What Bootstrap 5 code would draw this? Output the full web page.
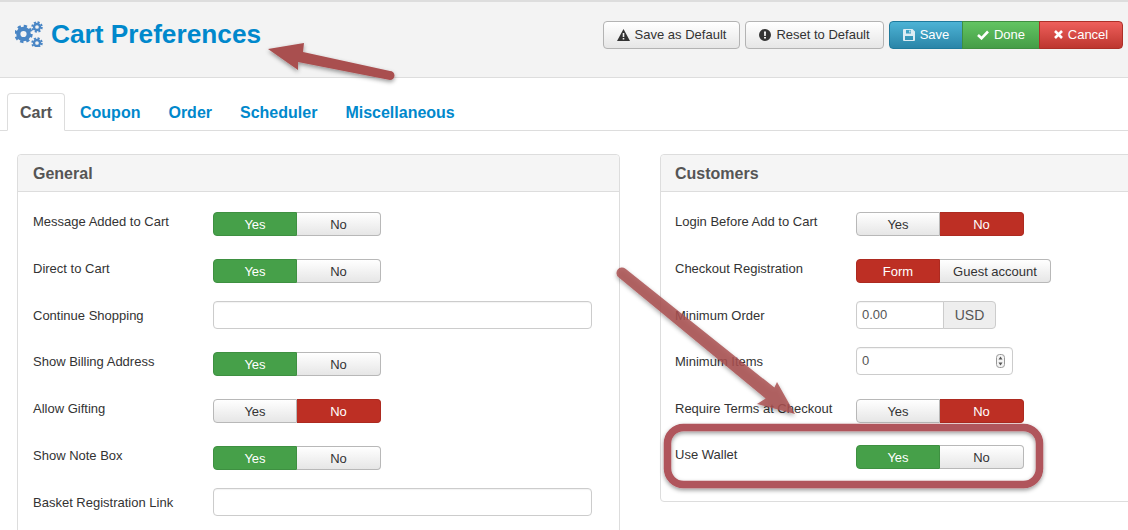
<!DOCTYPE html>
<html lang="en">
<head>
<meta charset="utf-8">
<title>Cart Preferences</title>
<link href="https://cdn.jsdelivr.net/npm/bootstrap@5.3.0/dist/css/bootstrap.min.css" rel="stylesheet">
<style>
html,body{height:100%;}
body{font-family:"Liberation Sans",Arial,sans-serif;font-size:13px;color:#333;background:#fff;overflow:hidden;width:1128px;height:530px;position:relative;}
.top-bar{background:#f3f3f3;border-top:2px solid #ddd;border-bottom:1px solid #ddd;height:78px;padding:0 5px 0 15px;}
.page-title{font-size:26.25px;line-height:32px;font-weight:700;color:#0088cc;margin:0;position:relative;top:-6px;}
.gears{width:30px;height:26px;margin-right:6px;}
.tool-row{position:relative;top:-5px;gap:5px;}
.tool-btn{font-size:13px;line-height:16px;height:28px;padding:0 0;border-radius:4px;display:inline-flex;align-items:center;justify-content:center;gap:5px;border:1px solid #b3b3b3;}
.tool-plain{background:linear-gradient(#fff,#e6e6e6);color:#333;width:137px;}
.tool-wide{width:139px;}
.tool-save{background:linear-gradient(#4db3d5,#2a85a8);border-color:#1f7a9c;color:#fff;width:74px;}
.tool-done{background:linear-gradient(#62c462,#459d47);border-color:#3f8f41;color:#fff;width:78px;}
.tool-cancel{background:linear-gradient(#ee5f5b,#bd362f);border-color:#ad2f28;color:#fff;width:84px;}
.tab-strip{padding:15px 0 0 7px;border-bottom-color:#ddd;}
.tab-strip .nav-link{font-size:16px;line-height:20px;font-weight:700;color:#0088cc;padding:9px 12px 7px;margin-right:2px;border-radius:4px 4px 0 0;height:38px;}
.tab-strip .nav-link.active{color:#555;border-color:#ddd #ddd #fff;}
.panels{padding:23px 0 0 17px;gap:40px;width:1400px;}
.panel-box{width:603px;border:1px solid #ddd;border-radius:4px;background:#fff;flex:none;}
.panel-tall{min-height:420px;}
.panel-head{background:#f5f5f5;border-bottom:1px solid #ddd;height:37px;padding:1px 15px 0;font-size:16px;font-weight:700;color:#555;line-height:36px;border-radius:4px 4px 0 0;}
.panel-body{padding:15px 15px 15px;}
.opt-right .panel-head,.opt-right .panel-body{padding-left:14px;}
.opt-row{height:46.83px;display:flex;}
.opt-right .opt-row{height:46.33px;}
.opt-right .opt-row:nth-child(-n+2){height:47px;}
.opt-label{width:180px;flex:none;line-height:16px;padding-top:7px;color:#333;}
.opt-right .opt-label{width:181px;}
.seg{margin-top:5px;height:24px;display:flex;}
.seg-btn{height:24px;width:84px;font-size:13px;line-height:23px;padding:0;text-align:center;border:1px solid #b8b8b8;background:linear-gradient(#fff,#e6e6e6);color:#333;border-radius:0;}
.seg-btn:first-child{border-radius:4px 0 0 4px;}
.seg-btn:last-child{border-radius:0 4px 4px 0;border-left:0;}
.seg-wide{width:111px;}
.seg-yes{background:#46a049;border-color:#3e9041;color:#fff;}
.seg-no{background:#bd2f24;border-color:#ad2a20;color:#fff;}
.text-box{height:28px;border:1px solid #ccc;border-radius:4px;font-size:13px;line-height:26px;padding:0 5px;color:#555;background:#fff;box-shadow:inset 0 1px 1px rgba(0,0,0,.05);}
.wide-box{width:379px;}
.unit-group{width:140px;height:28px;}
.unit-group .text-box{width:88px;border-radius:4px 0 0 4px;}
.unit-tag{width:53px;margin-left:-1px;border:1px solid #ccc;border-radius:0 4px 4px 0;background:#eee;color:#555;font-size:14px;line-height:26px;text-align:center;}
.spin-wrap{position:relative;width:157px;height:28px;}
.spin-wrap .text-box{width:157px;}
.spin-icon{position:absolute;right:8px;top:7px;width:9px;height:14px;}
.notes{position:absolute;left:0;top:0;width:1128px;height:530px;pointer-events:none;}
</style>
</head>
<body>
<header class="top-bar d-flex align-items-center justify-content-between">
  <h1 class="page-title d-flex align-items-center">
    <svg class="gears" viewBox="0 0 30 26" aria-hidden="true">
      <g fill="none" stroke="#4a86c5">
        <circle cx="8.500" cy="13" r="5.200" stroke-width="4.200"/>
        <circle cx="8.500" cy="13" r="7.900" stroke-width="2.600" stroke-dasharray="3.300 2.905"/>
        <circle cx="22" cy="6" r="3" stroke-width="2.300"/>
        <circle cx="22" cy="6" r="4.800" stroke-width="1.900" stroke-dasharray="2.100 1.670"/>
        <circle cx="22" cy="22" r="3" stroke-width="2.300"/>
        <circle cx="22" cy="22" r="4.800" stroke-width="1.900" stroke-dasharray="2.100 1.670"/>
      </g>
    </svg>
    Cart Preferences
  </h1>
  <div class="tool-row d-flex">
    <button type="button" class="btn tool-btn tool-plain">
      <svg width="13" height="12" viewBox="0 0 13 12"><path fill="#333" fill-rule="evenodd" d="M6.500 0 13 12H0zM5.700 4v4h1.600V4zm0 4.900v1.500h1.600V8.900z"/></svg>
      Save as Default</button>
    <button type="button" class="btn tool-btn tool-plain tool-wide">
      <svg width="12" height="12" viewBox="0 0 12 12"><path fill="#333" fill-rule="evenodd" d="M6 0a6 6 0 1 1 0 12A6 6 0 0 1 6 0zM5 2.400l.2 4.600h1.600L7 2.400zm0 5.500v1.700h2V7.900z"/></svg>
      Reset to Default</button>
    <div class="btn-group">
      <button type="button" class="btn tool-btn tool-save">
        <svg width="12" height="12" viewBox="0 0 12 12"><path fill="#dcecf3" fill-rule="evenodd" d="M1 0h8.500L12 2.500V11a1 1 0 0 1-1 1H1a1 1 0 0 1-1-1V1a1 1 0 0 1 1-1zm2 1v3.500h5V1zM2 7v4h8V7zm4.200-5.600h1.300v2.200H6.200z"/></svg>
        Save</button>
      <button type="button" class="btn tool-btn tool-done">
        <svg width="12" height="10" viewBox="0 0 12 10"><path fill="none" stroke="#fff" stroke-width="2.600" d="M1 5l3.500 3.300L11 1.500"/></svg>
        Done</button>
      <button type="button" class="btn tool-btn tool-cancel">
        <svg width="9" height="9" viewBox="0 0 9 9"><path fill="none" stroke="#fff" stroke-width="2.600" d="M1 1l7 7M8 1L1 8"/></svg>
        Cancel</button>
    </div>
  </div>
</header>

<ul class="nav nav-tabs tab-strip">
  <li class="nav-item"><a class="nav-link active" href="#">Cart</a></li>
  <li class="nav-item"><a class="nav-link" href="#">Coupon</a></li>
  <li class="nav-item"><a class="nav-link" href="#">Order</a></li>
  <li class="nav-item"><a class="nav-link" href="#">Scheduler</a></li>
  <li class="nav-item"><a class="nav-link" href="#">Miscellaneous</a></li>
</ul>

<main class="panels d-flex align-items-start">
  <section class="panel-box panel-tall">
    <div class="panel-head">General</div>
    <div class="panel-body">
      <div class="opt-row"><div class="opt-label">Message Added to Cart</div><div class="seg"><button class="seg-btn seg-yes">Yes</button><button class="seg-btn">No</button></div></div>
      <div class="opt-row"><div class="opt-label">Direct to Cart</div><div class="seg"><button class="seg-btn seg-yes">Yes</button><button class="seg-btn">No</button></div></div>
      <div class="opt-row"><div class="opt-label">Continue Shopping</div><div class="text-box wide-box"></div></div>
      <div class="opt-row"><div class="opt-label">Show Billing Address</div><div class="seg"><button class="seg-btn seg-yes">Yes</button><button class="seg-btn">No</button></div></div>
      <div class="opt-row"><div class="opt-label">Allow Gifting</div><div class="seg"><button class="seg-btn">Yes</button><button class="seg-btn seg-no">No</button></div></div>
      <div class="opt-row"><div class="opt-label">Show Note Box</div><div class="seg"><button class="seg-btn seg-yes">Yes</button><button class="seg-btn">No</button></div></div>
      <div class="opt-row"><div class="opt-label">Basket Registration Link</div><div class="text-box wide-box"></div></div>
    </div>
  </section>
  <section class="panel-box opt-right">
    <div class="panel-head">Customers</div>
    <div class="panel-body">
      <div class="opt-row"><div class="opt-label">Login Before Add to Cart</div><div class="seg"><button class="seg-btn">Yes</button><button class="seg-btn seg-no">No</button></div></div>
      <div class="opt-row"><div class="opt-label">Checkout Registration</div><div class="seg"><button class="seg-btn seg-no">Form</button><button class="seg-btn seg-wide">Guest account</button></div></div>
      <div class="opt-row"><div class="opt-label">Minimum Order</div><div class="unit-group d-flex"><div class="text-box">0.00</div><div class="unit-tag">USD</div></div></div>
      <div class="opt-row"><div class="opt-label">Minimum Items</div><div class="spin-wrap"><div class="text-box">0</div>
        <svg class="spin-icon" viewBox="0 0 9 14"><rect x=".5" y=".5" width="8" height="13" rx="3" fill="#f4f4f4" stroke="#999"/><path fill="#555" d="M4.500 2.500 6.500 5.500h-4zM4.500 11.500 2.500 8.500h4z"/></svg></div></div>
      <div class="opt-row"><div class="opt-label">Require Terms at Checkout</div><div class="seg"><button class="seg-btn">Yes</button><button class="seg-btn seg-no">No</button></div></div>
      <div class="opt-row"><div class="opt-label">Use Wallet</div><div class="seg"><button class="seg-btn seg-yes">Yes</button><button class="seg-btn">No</button></div></div>
    </div>
  </section>
</main>

<svg class="notes" viewBox="0 0 1128 530" aria-hidden="true">
  <defs><filter id="soft" x="-20%" y="-20%" width="140%" height="140%"><feDropShadow dx="0" dy="2" stdDeviation="2" flood-color="#000" flood-opacity=".4"/></filter></defs>
  <g filter="url(#soft)">
    <path fill="#a94f50" d="M268 49 304 43 303 52 390 71a4.500 4.500 0 0 1 0 9L298 62 298 70z"/>
    <path fill="#a94f50" fill-opacity=".84" d="M625.500 268.700 774.400 387.600 777 382 795 414 757 404 765.600 398.400 618.500 277.300a5.500 5.500 0 0 1 7-8.600z"/>
    <rect x="667.500" y="427.500" width="372" height="57" rx="16" fill="none" stroke="#b0545c" stroke-width="7.500"/>
  </g>
</svg>
<script src="https://cdn.jsdelivr.net/npm/bootstrap@5.3.0/dist/js/bootstrap.bundle.min.js"></script>
</body>
</html>
